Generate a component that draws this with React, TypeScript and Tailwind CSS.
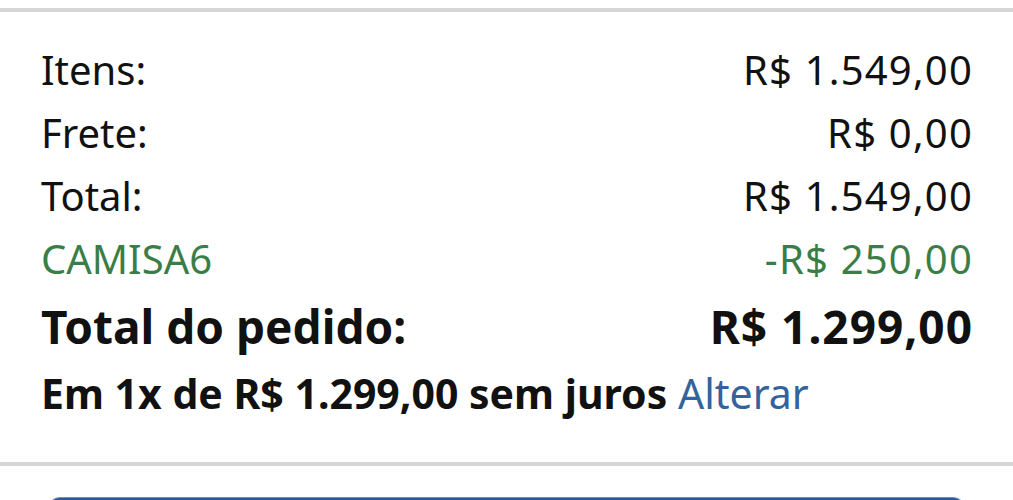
import React from "react";

const rows = [
  { label: "Itens:", value: "R$ 1.549,00" },
  { label: "Frete:", value: "R$ 0,00" },
  { label: "Total:", value: "R$ 1.549,00" },
];

const App = () => {
  return (
    <div
      className="h-[500px] w-full overflow-hidden bg-white text-[#111111]"
      style={{ fontFamily: '"Noto Sans", "Open Sans", sans-serif' }}
    >
      <div className="h-[8px]" />
      <div className="h-[4px] bg-[#d6d6d6]" />

      <div className="pl-[41px] pr-[40px] pt-[26px] pb-[37px]">
        {rows.map((r) => (
          <div key={r.label} className="flex justify-between text-[40px] leading-[63px]">
            <span>{r.label}</span>
            <span className="tracking-[1.2px]">{r.value}</span>
          </div>
        ))}
        <div className="flex justify-between text-[40px] leading-[63px] text-[#3b7d47]">
          <span>CAMISA6</span>
          <span className="tracking-[1.2px]">-R$ 250,00</span>
        </div>
        <div className="flex justify-between text-[46px] font-bold leading-[72px]">
          <span>Total do pedido:</span>
          <span className="tracking-[1px]">R$ 1.299,00</span>
        </div>
        <div className="text-[41px] leading-[63px]">
          <span className="font-bold">Em 1x de R$ 1.299,00 sem juros</span>{" "}
          <a className="text-[#33639c]">Alterar</a>
        </div>
      </div>

      <div className="h-[4px] bg-[#d6d6d6]" />

      <div className="px-[48px] pt-[31px]">
        <button className="h-[60px] w-full rounded-[12px] border-t border-[#6f90bd] bg-[#2c5a92]" />
      </div>
    </div>
  );
};

export default App;
